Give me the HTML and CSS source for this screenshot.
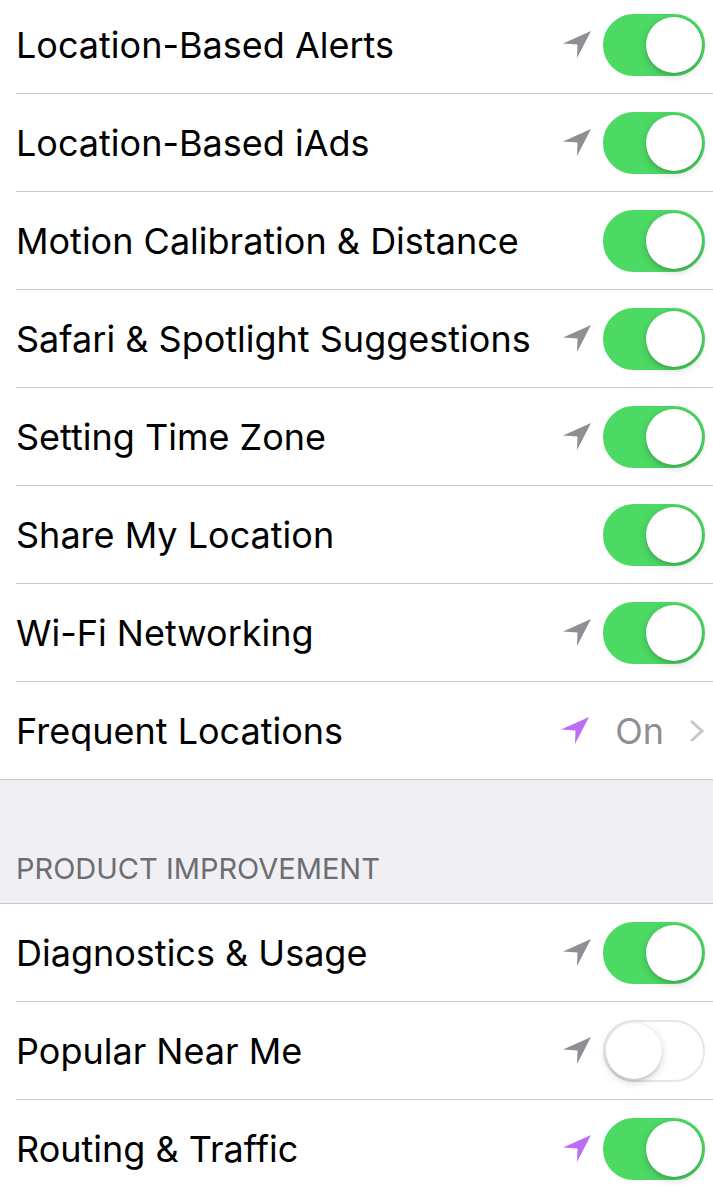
FILE: index.html
```html
<!DOCTYPE html>
<html lang="en">
<head>
    <meta charset="UTF-8">
    <meta name="viewport" content="width=device-width, initial-scale=1.0">
    <title>Location Services</title>
    <link rel="stylesheet" href="styles.css">
</head>
<body>
    <ul class="group first">
        <li class="row"><span class="label">Location-Based Alerts</span>
            <span class="accessory">
                <svg class="arrow" viewBox="0 0 28 28"><polygon points="0,12.5 28,0 14,27 14.5,13.5"/></svg>
                <span class="switch on"><span class="knob"></span></span>
            </span>
        </li>
        <li class="row"><span class="label">Location-Based iAds</span>
            <span class="accessory">
                <svg class="arrow" viewBox="0 0 28 28"><polygon points="0,12.5 28,0 14,27 14.5,13.5"/></svg>
                <span class="switch on"><span class="knob"></span></span>
            </span>
        </li>
        <li class="row"><span class="label">Motion Calibration &amp; Distance</span>
            <span class="accessory">
                <span class="switch on"><span class="knob"></span></span>
            </span>
        </li>
        <li class="row"><span class="label">Safari &amp; Spotlight Suggestions</span>
            <span class="accessory">
                <svg class="arrow" viewBox="0 0 28 28"><polygon points="0,12.5 28,0 14,27 14.5,13.5"/></svg>
                <span class="switch on"><span class="knob"></span></span>
            </span>
        </li>
        <li class="row"><span class="label">Setting Time Zone</span>
            <span class="accessory">
                <svg class="arrow" viewBox="0 0 28 28"><polygon points="0,12.5 28,0 14,27 14.5,13.5"/></svg>
                <span class="switch on"><span class="knob"></span></span>
            </span>
        </li>
        <li class="row"><span class="label">Share My Location</span>
            <span class="accessory">
                <span class="switch on"><span class="knob"></span></span>
            </span>
        </li>
        <li class="row"><span class="label">Wi-Fi Networking</span>
            <span class="accessory">
                <svg class="arrow" viewBox="0 0 28 28"><polygon points="0,12.5 28,0 14,27 14.5,13.5"/></svg>
                <span class="switch on"><span class="knob"></span></span>
            </span>
        </li>
        <li class="row"><span class="label">Frequent Locations</span>
            <span class="accessory link">
                <svg class="arrow purple" viewBox="0 0 28 28"><polygon points="0,12.5 28,0 14,27 14.5,13.5"/></svg>
                <span class="value">On</span>
                <svg class="chevron" viewBox="0 0 15 24"><polyline points="2,2 13,12 2,22"/></svg>
            </span>
        </li>
    </ul>

    <div class="section-header">PRODUCT IMPROVEMENT</div>

    <ul class="group">
        <li class="row"><span class="label">Diagnostics &amp; Usage</span>
            <span class="accessory">
                <svg class="arrow" viewBox="0 0 28 28"><polygon points="0,12.5 28,0 14,27 14.5,13.5"/></svg>
                <span class="switch on"><span class="knob"></span></span>
            </span>
        </li>
        <li class="row"><span class="label">Popular Near Me</span>
            <span class="accessory">
                <svg class="arrow" viewBox="0 0 28 28"><polygon points="0,12.5 28,0 14,27 14.5,13.5"/></svg>
                <span class="switch"><span class="knob"></span></span>
            </span>
        </li>
        <li class="row"><span class="label">Routing &amp; Traffic</span>
            <span class="accessory">
                <svg class="arrow purple" viewBox="0 0 28 28"><polygon points="0,12.5 28,0 14,27 14.5,13.5"/></svg>
                <span class="switch on"><span class="knob"></span></span>
            </span>
        </li>
    </ul>
</body>
</html>
```

FILE: styles.css
```css
body {
    margin: 0;
    background-color: #efeff4;
    font-family: Inter, Roboto, sans-serif;
    color: #000;
    overflow: hidden;
}
.group {
    list-style: none;
    margin: 0;
    padding: 0;
    background-color: #fff;
    border-top: 1px solid #c8c7cc;
    border-bottom: 1px solid #c8c7cc;
}
.group.first {
    margin-top: -5px;
}
.row {
    display: flex;
    align-items: center;
    justify-content: space-between;
    height: 97px;
    margin-left: 16px;
    padding-right: 8px;
    border-bottom: 1px solid #c8c7cc;
}
.row:last-child {
    border-bottom: none;
}
.label {
    font-size: 36px;
}
.accessory {
    display: flex;
    align-items: center;
    gap: 12px;
}
.arrow {
    width: 28px;
    height: 28px;
    fill: #8e8e93;
}
.arrow.purple {
    fill: #bd6cf5;
}
.link .arrow {
    margin-right: 14px;
}
.value {
    font-size: 36px;
    color: #8e8e93;
    margin-right: 13px;
}
.chevron {
    width: 15px;
    height: 24px;
    fill: none;
    stroke: #c7c7cc;
    stroke-width: 3;
    margin-right: 1px;
}
.switch {
    display: flex;
    justify-content: flex-start;
    box-sizing: border-box;
    width: 102px;
    height: 62px;
    padding: 1px;
    border-radius: 31px;
    background-color: #fff;
    border: 2px solid #e5e5ea;
}
.switch.on {
    justify-content: flex-end;
    background-color: #4cd964;
    border-color: #4cd964;
}
.knob {
    width: 56px;
    height: 56px;
    border-radius: 50%;
    background-color: #fff;
    box-shadow: 0 3px 8px rgba(0, 0, 0, 0.18), 0 3px 1px rgba(0, 0, 0, 0.06), 0 0 0 0.5px rgba(0, 0, 0, 0.06);
}
.section-header {
    height: 123px;
    box-sizing: border-box;
    padding: 0 0 17px 16px;
    display: flex;
    align-items: flex-end;
    font-size: 29px;
    color: #6d6d72;
}
```
